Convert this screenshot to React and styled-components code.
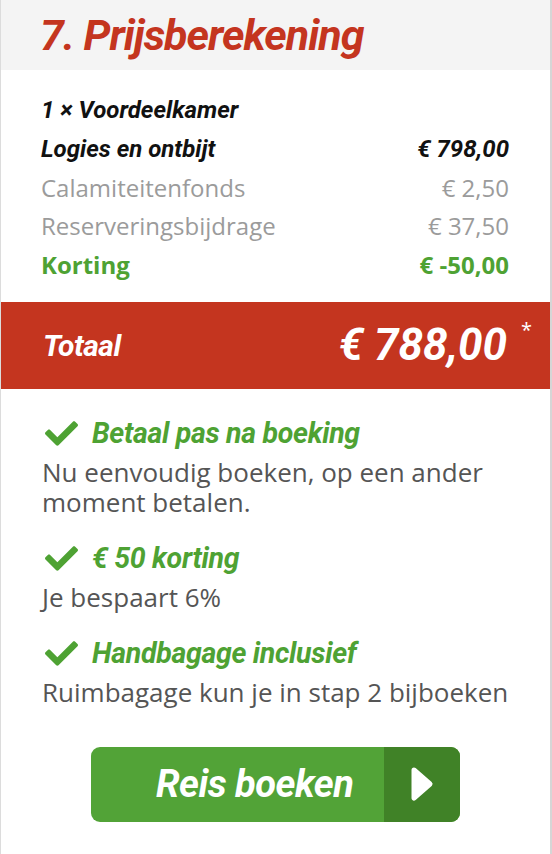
import React from "react";
import styled, { createGlobalStyle } from "styled-components";
import { FaCheck } from "react-icons/fa";

const DISPLAY = `Roboto, "DejaVu Sans Condensed", sans-serif`;
const BODY = `"Open Sans", "Liberation Sans", sans-serif`;

const GlobalStyle = createGlobalStyle`
  html, body {
    margin: 0;
    padding: 0;
    background: #fff;
  }
`;

const Panel = styled.div`
  width: 552px;
  height: 854px;
  box-sizing: border-box;
  border-left: 1px solid #dcdcdc;
  border-right: 2px solid #d6d6d6;
  background: #fff;
  overflow: hidden;
`;

const Header = styled.div`
  background: #f4f4f4;
  height: 70px;
  display: flex;
  align-items: center;
  padding-left: 39px;
`;

const Heading = styled.h2`
  margin: 0;
  font-family: ${DISPLAY};
  font-weight: 700;
  font-style: italic;
  font-size: 43px;
  letter-spacing: -1px;
  color: #c4351f;
`;

const Rows = styled.div`
  padding: 21px 41px 18px 40px;
  display: flex;
  flex-direction: column;
`;

const Row = styled.div`
  display: flex;
  justify-content: space-between;
  align-items: center;
  height: 38.5px;
  font-family: ${(p) => (p.$kind === "strong" ? DISPLAY : BODY)};
  font-style: ${(p) => (p.$kind === "strong" ? "italic" : "normal")};
  font-weight: ${(p) => (p.$kind === "muted" ? 400 : 700)};
  font-size: 24px;
  color: ${(p) =>
    p.$kind === "muted" ? "#9b9b9b" : p.$kind === "discount" ? "#4ea233" : "#111"};
`;

const TotalBand = styled.div`
  background: #c4351f;
  height: 87px;
  display: flex;
  align-items: center;
  justify-content: space-between;
  padding: 0 43px 0 42px;
  color: #fff;
  font-family: ${DISPLAY};
  font-weight: 700;
  font-style: italic;
`;

const TotalLabel = styled.span`
  font-size: 30px;
  letter-spacing: -0.5px;
`;

const TotalAmount = styled.span`
  position: relative;
  font-size: 44px;
`;

const Asterisk = styled.span`
  position: absolute;
  right: -25px;
  top: -3px;
  font-family: ${BODY};
  font-style: normal;
  font-weight: 400;
  font-size: 20px;
`;

const Features = styled.div`
  padding: 28px 40px 0 41px;
  display: flex;
  flex-direction: column;
  gap: 25px;
`;

const Feature = styled.div`
  display: flex;
  flex-direction: column;
`;

const FeatureTitle = styled.div`
  display: flex;
  align-items: center;
  gap: 14px;
  height: 34px;
  padding-left: 3px;
  color: #4ea233;
  font-family: ${DISPLAY};
  font-weight: 700;
  font-style: italic;
  font-size: 28.5px;
  letter-spacing: -0.3px;
`;

const FeatureText = styled.p`
  margin: 6px 0 0;
  font-family: ${BODY};
  font-size: 26px;
  line-height: 30px;
  color: #555;
`;

const BookButton = styled.button`
  margin: 40px 0 0 90px;
  width: 369px;
  height: 75px;
  padding: 0;
  border: 0;
  border-radius: 9px;
  overflow: hidden;
  display: flex;
  cursor: pointer;
  background: #52a337;
`;

const ButtonLabel = styled.span`
  flex: 1;
  display: flex;
  align-items: center;
  padding-left: 65px;
  color: #fff;
  font-family: ${DISPLAY};
  font-weight: 700;
  font-style: italic;
  font-size: 38px;
  letter-spacing: -0.5px;
  white-space: nowrap;
`;

const ButtonArrow = styled.span`
  width: 76px;
  background: #408227;
  display: flex;
  align-items: center;
  justify-content: center;
`;

const rows = [
  { label: "1 × Voordeelkamer", amount: "", kind: "strong" },
  { label: "Logies en ontbijt", amount: "€ 798,00", kind: "strong" },
  { label: "Calamiteitenfonds", amount: "€ 2,50", kind: "muted" },
  { label: "Reserveringsbijdrage", amount: "€ 37,50", kind: "muted" },
  { label: "Korting", amount: "€ -50,00", kind: "discount" },
];

const features = [
  {
    title: "Betaal pas na boeking",
    text: "Nu eenvoudig boeken, op een ander moment betalen.",
  },
  { title: "€ 50 korting", text: "Je bespaart 6%" },
  { title: "Handbagage inclusief", text: "Ruimbagage kun je in stap 2 bijboeken" },
];

export default function App() {
  return (
    <>
      <GlobalStyle />
      <Panel>
        <Header>
          <Heading>7. Prijsberekening</Heading>
        </Header>

        <Rows>
          {rows.map((r) => (
            <Row key={r.label} $kind={r.kind}>
              <span>{r.label}</span>
              <span>{r.amount}</span>
            </Row>
          ))}
        </Rows>

        <TotalBand>
          <TotalLabel>Totaal</TotalLabel>
          <TotalAmount>
            € 788,00
            <Asterisk>*</Asterisk>
          </TotalAmount>
        </TotalBand>

        <Features>
          {features.map((f) => (
            <Feature key={f.title}>
              <FeatureTitle>
                <FaCheck size={33} color="#4ea233" />
                {f.title}
              </FeatureTitle>
              <FeatureText>{f.text}</FeatureText>
            </Feature>
          ))}
        </Features>

        <BookButton>
          <ButtonLabel>Reis boeken</ButtonLabel>
          <ButtonArrow>
            <svg width="24" height="36" viewBox="0 0 24 36">
              <path
                d="M4 4 L20 18 L4 32 Z"
                fill="#fff"
                stroke="#fff"
                strokeWidth="5"
                strokeLinejoin="round"
              />
            </svg>
          </ButtonArrow>
        </BookButton>
      </Panel>
    </>
  );
}
